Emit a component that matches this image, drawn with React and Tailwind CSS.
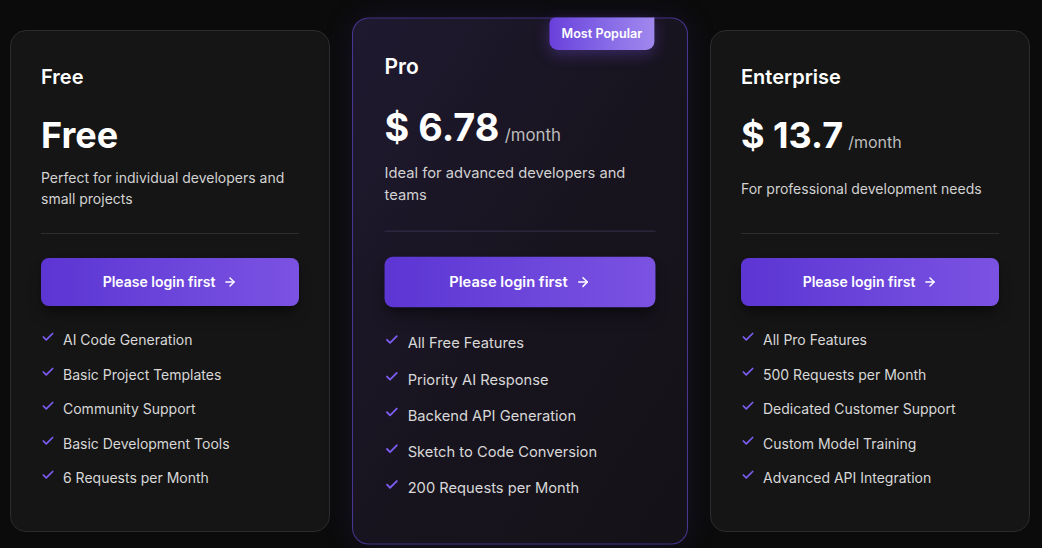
import { ArrowRight, Check } from "lucide-react";

const plans = [
  {
    name: "Free",
    price: "Free",
    perMonth: false,
    desc: "Perfect for individual developers and small projects",
    features: [
      "AI Code Generation",
      "Basic Project Templates",
      "Community Support",
      "Basic Development Tools",
      "6 Requests per Month",
    ],
  },
  {
    name: "Pro",
    price: "$ 6.78",
    perMonth: true,
    popular: true,
    desc: "Ideal for advanced developers and teams",
    features: [
      "All Free Features",
      "Priority AI Response",
      "Backend API Generation",
      "Sketch to Code Conversion",
      "200 Requests per Month",
    ],
  },
  {
    name: "Enterprise",
    price: "$ 13.7",
    perMonth: true,
    desc: "For professional development needs",
    features: [
      "All Pro Features",
      "500 Requests per Month",
      "Dedicated Customer Support",
      "Custom Model Training",
      "Advanced API Integration",
    ],
  },
];

function PlanCard({ plan }) {
  const pro = plan.popular;
  return (
    <div
      className={
        pro
          ? "relative w-[320px] h-[502px] scale-105 rounded-2xl border border-[#4a3590] bg-gradient-to-br from-[#1f1930] via-[#18141f] to-[#141217] px-[30px] pt-8 shadow-[0_0_30px_rgba(110,70,220,0.12)]"
          : "relative w-[320px] h-[502px] rounded-2xl border border-[#2c2c2c] bg-[#151515] px-[30px] pt-8"
      }
    >
      {pro && (
        <div className="absolute -top-px right-[31px] flex h-[31px] w-[100px] items-center justify-center rounded-b-lg rounded-tl-md bg-gradient-to-r from-[#6a3fdc] to-[#a188ee] text-[12px] font-semibold text-white shadow-[0_4px_14px_rgba(120,80,230,0.35)]">
          Most Popular
        </div>
      )}

      <h3 className="text-xl leading-7 font-semibold text-white">{plan.name}</h3>

      <div className="mt-6 flex items-baseline gap-[5px]">
        <span className="text-4xl leading-10 font-bold text-white">{plan.price}</span>
        {plan.perMonth && <span className="text-base text-[#bdbdbd]">/month</span>}
      </div>

      <div className="mt-3 flex h-[42px] items-center">
        <p className="text-sm leading-[21px] text-[#d2d2d2]">{plan.desc}</p>
      </div>

      <div className={pro ? "mt-6 h-px bg-[#34304a]" : "mt-6 h-px bg-[#2e2e2e]"} />

      <button className="mt-6 flex h-12 w-full items-center justify-center gap-2 rounded-lg bg-gradient-to-r from-[#5c35d3] to-[#7b52e2] text-sm font-semibold text-white shadow-lg shadow-black/40">
        Please login first
        <ArrowRight className="h-3.5 w-3.5" strokeWidth={2.5} />
      </button>

      <ul className="mt-6 flex flex-col gap-[14.5px]">
        {plan.features.map((f) => (
          <li key={f} className="flex items-center gap-2 text-sm leading-5 text-[#d8d8d8]">
            <Check className="h-3.5 w-3.5 -translate-y-[3px] text-[#7c5cf2]" strokeWidth={3} />
            {f}
          </li>
        ))}
      </ul>
    </div>
  );
}

export default function App() {
  return (
    <div
      className="min-h-screen w-full bg-[#0b0b0b] pl-[10px] pt-[30px]"
      style={{ fontFamily: "Inter, 'Noto Sans', sans-serif" }}
    >
      <div className="flex items-start gap-[30px]">
        {plans.map((p) => (
          <PlanCard key={p.name} plan={p} />
        ))}
      </div>
    </div>
  );
}
